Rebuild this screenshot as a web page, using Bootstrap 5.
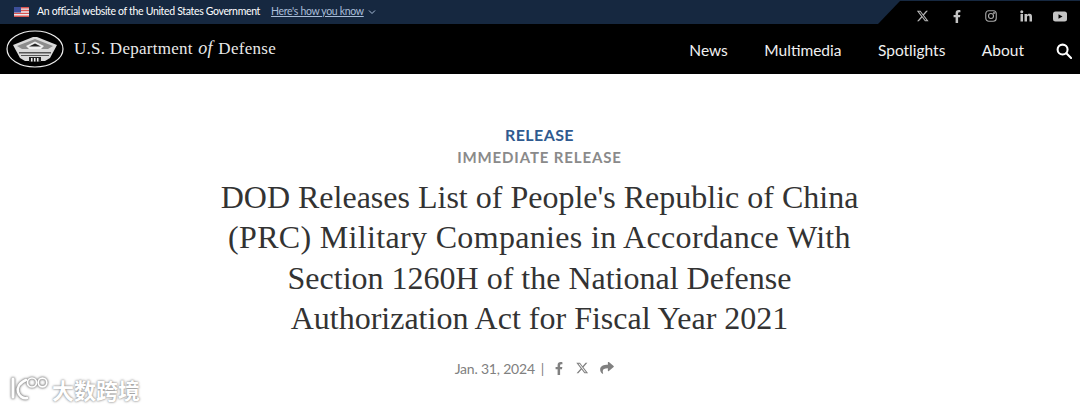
<!DOCTYPE html>
<html lang="en">
<head>
<meta charset="utf-8">
<title>DOD Release</title>
<link rel="stylesheet" href="https://cdn.jsdelivr.net/npm/bootstrap@5.3.0/dist/css/bootstrap.min.css">
<style>
html,body{height:409px;overflow:hidden;background:#fff;font-family:Lato,sans-serif}
.gov-strip{height:24px;background:#162840;color:#fff;font-size:10.5px}
.gov-flag{margin-left:14px;margin-right:8px}
.gov-label{letter-spacing:-.33px}
.gov-how{color:#a9bdd8;margin-left:11px;text-decoration:underline;letter-spacing:-.33px}
.gov-social{width:202px;height:24px;background:#000;clip-path:polygon(22px 1px,100% 1px,100% 100%,0 100%);padding:8px 3px 0 0}
.gov-social svg{display:block}
.soc-slot{width:34.25px;display:flex;justify-content:center}
.main-bar{height:50px;background:#000;color:#fff}
.seal{margin-left:6px;margin-right:10px}
.brand-name{font-family:"Liberation Serif",serif;font-size:17px;letter-spacing:.27px;color:#e9e9e9;margin-bottom:2px}
.brand-name i{font-size:18px;margin:0 1px}
.main-link{color:#f0f0f0;font-size:15.5px;text-decoration:none}
.main-links{gap:36.5px;margin-right:32px;padding-top:3px}
.search-ico{margin-right:8px;margin-top:3px}
.rel-head{padding-top:50px;padding-right:1px}
.rel-type{color:#2f5a8f;font-size:16px;font-weight:700;line-height:22px;letter-spacing:.4px}
.rel-sub{color:#8a8a8a;font-size:15px;font-weight:700;line-height:22px;letter-spacing:.87px}
.rel-title{font-family:"Liberation Serif",serif;font-weight:400;font-size:32px;line-height:40.3px;color:#333;width:680px;margin:9px auto 0}
.title-wide{letter-spacing:.33px}
.rel-meta{color:#808080;font-size:14px;margin-top:19px;height:22px;padding-right:10px}
.rel-date{letter-spacing:-.2px}
.rel-sep{margin:0 11px 0 6px}
.rel-meta svg{display:block}
.gap-fb{margin-right:13px}
.gap-x{margin-right:11px}
.wm{position:absolute;left:8px;top:374px;display:flex;align-items:center;color:#fff;text-shadow:0 0 2px #8a8a8a,0 0 3px #aaa}
.wm-zh{font-family:"Noto Sans CJK SC",sans-serif;font-size:22px;font-weight:700;line-height:30px;letter-spacing:0;margin-left:3px}
.wm svg{filter:drop-shadow(0 0 1px #777) drop-shadow(0 0 1px #aaa)}
</style>
</head>
<body>
<header>
  <div class="gov-strip d-flex align-items-center justify-content-between">
    <div class="d-flex align-items-center">
      <svg class="gov-flag" width="15" height="10" viewBox="0 0 15 10"><rect width="15" height="10" fill="#e8eaf0"/><path d="M0 0h15v1.400H0zM0 2.800h15v1.400H0zM0 5.700h15v1.400H0zM0 8.600h15V10H0z" fill="#d9534f"/><rect width="7" height="5.500" fill="#3d4f9a"/></svg>
      <span class="gov-label">An official website of the United States Government</span>
      <span class="gov-how">Here's how you know</span>
      <svg class="ms-1" width="8" height="6" viewBox="0 0 8 6"><path d="M1 1.500 4 4.500 7 1.500" fill="none" stroke="#a9bdd8" stroke-width="1"/></svg>
    </div>
    <div class="gov-social d-flex align-items-center justify-content-end">
      <span class="soc-slot"><svg width="12" height="12" viewBox="0 0 24 24"><path d="M18.200 1.500h3.600l-7.900 9 9.300 12h-7.300l-5.700-7.400-6.500 7.400H.1l8.400-9.600L-.4 1.500H7l5.200 6.800zM17 20.400h2L6.100 3.500H3.900z" fill="#b5b5b5"/></svg></span>
      <span class="soc-slot"><svg width="8" height="13" viewBox="0 0 320 512"><path d="M279 288l14-93h-89v-60c0-25 12-50 52-50h41V6s-37-6-72-6c-73 0-121 44-121 125v70H23v93h81v224h100V288z" fill="#c4c4c4"/></svg></span>
      <span class="soc-slot"><svg width="12" height="12" viewBox="0 0 24 24" fill="none" stroke="#a8a8a8" stroke-width="2.200"><rect x="1.500" y="1.500" width="21" height="21" rx="6"/><circle cx="12" cy="12" r="5"/><circle cx="18" cy="6" r=".8" fill="#a8a8a8"/></svg></span>
      <span class="soc-slot"><svg width="12" height="12" viewBox="0 0 24 24" fill="#c4c4c4"><rect x="1" y="8" width="5" height="15"/><circle cx="3.500" cy="3.500" r="3"/><path d="M9 8h5v2.200c1-1.600 2.700-2.600 5-2.600 3.600 0 5 2.400 5 6V23h-5v-8.300c0-2-.7-3-2.300-3-1.800 0-2.700 1.200-2.700 3V23H9z"/></svg></span>
      <span class="soc-slot"><svg width="14" height="11" viewBox="0 0 28 20"><rect width="28" height="20" rx="5" fill="#c4c4c4"/><path d="M11 5.500v9l8-4.500z" fill="#000"/></svg></span>
    </div>
  </div>
  <nav class="main-bar d-flex align-items-center">
    <svg class="seal" width="58" height="38" viewBox="0 0 58 38">
      <ellipse cx="29" cy="19" rx="28" ry="18" fill="none" stroke="#eee" stroke-width="1.200"/>
      <path d="M7 15 27 7h4l20 8-7 13-5 3H19l-5-3z" fill="#d9d9d9"/>
      <path d="M11 16 29 9 47 16 42 19H16z" fill="#8c8c8c"/>
      <path d="M20 16 29 11.500 38 16 35 19H23z" fill="#eee"/>
      <path d="M23 16.500 29 13.500 35 16.500z" fill="#222"/>
      <path d="M13 22h32v1.500H13zM15 25h28v1H15z" fill="#555"/>
      <rect x="23" y="27" width="12" height="5" fill="#222"/>
      <path d="M25 28h1.500v3.500H25zM28 28h1.500v3.500H28zM31 28h1.500v3.500H31z" fill="#eee"/>
    </svg>
    <span class="brand-name">U.S. Department <i>of</i> Defense</span>
    <div class="d-flex align-items-center ms-auto main-links">
      <a class="main-link" href="#">News</a>
      <a class="main-link" href="#">Multimedia</a>
      <a class="main-link" href="#">Spotlights</a>
      <a class="main-link" href="#">About</a>
    </div>
    <svg class="search-ico" width="16" height="16" viewBox="0 0 17 17" fill="none" stroke="#fff" stroke-width="2.200"><circle cx="7" cy="7" r="5.300"/><path d="M11 11l5 5" stroke-linecap="round"/></svg>
  </nav>
</header>
<main class="rel-head text-center">
  <div class="rel-type">RELEASE</div>
  <div class="rel-sub">IMMEDIATE RELEASE</div>
  <h1 class="rel-title">DOD Releases List of People's Republic of China <span class="title-wide">(PRC) Military Companies in Accordance With</span> Section 1260H of the National Defense Authorization Act for Fiscal Year 2021</h1>
  <div class="rel-meta d-flex align-items-center justify-content-center">
    <span class="rel-date">Jan. 31, 2024</span><span class="rel-sep">|</span>
    <svg class="gap-fb" width="8" height="13" viewBox="0 0 320 512"><path d="M279 288l14-93h-89v-60c0-25 12-50 52-50h41V6s-37-6-72-6c-73 0-121 44-121 125v70H23v93h81v224h100V288z" fill="#808080"/></svg>
    <svg class="gap-x" width="13" height="12" viewBox="0 0 24 24"><path d="M18.200 1.500h3.600l-7.900 9 9.300 12h-7.300l-5.700-7.400-6.500 7.400H.1l8.400-9.600L-.4 1.500H7l5.200 6.800zM17 20.400h2L6.100 3.500H3.900z" fill="#808080"/></svg>
    <svg width="14" height="12" viewBox="0 0 512 448"><path d="M503 165 327 13c-15-13-39-2-39 18v80C127 113 0 145 0 297c0 61 39 122 83 154 14 10 33-3 28-19-45-145 22-184 177-186v88c0 21 24 31 39 18l176-152c11-10 11-26 0-35z" fill="#808080" transform="translate(0 -12)"/></svg>
  </div>
</main>
<div class="wm" aria-label="watermark">
  <svg width="41" height="30" viewBox="0 0 41 30" fill="none" stroke="#fff" stroke-linecap="round">
    <path d="M5 5v18" stroke-width="3"/>
    <path d="M18 6 C11 9 9 14 10 18 C11 22 15 25 19 24" stroke-width="2.600"/>
    <circle cx="24" cy="8.500" r="4.500" stroke-width="1.700"/><circle cx="34.500" cy="8.500" r="4.300" stroke-width="1.700"/>
  </svg>
  <span class="wm-zh">大数跨境</span>
</div>
</body>
</html>
